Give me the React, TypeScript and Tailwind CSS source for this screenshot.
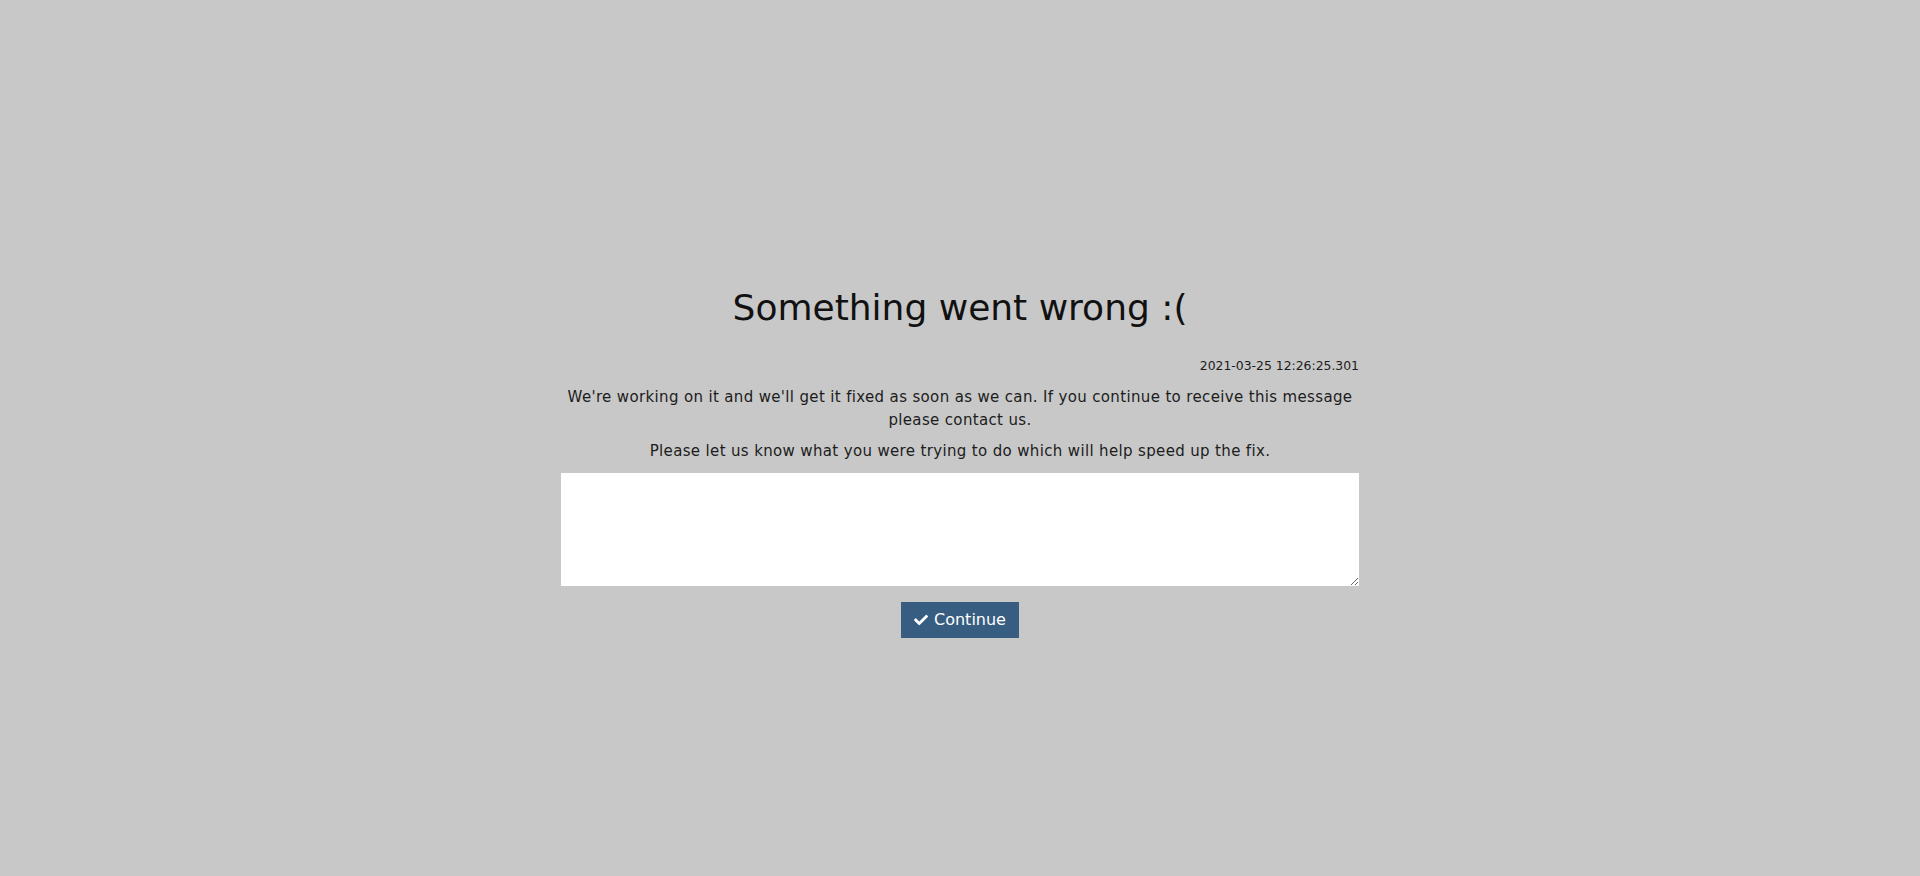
import { FaCheck } from "react-icons/fa";
import { useState } from "react";

const App = () => {
  const [message, setMessage] = useState("");

  return (
    <div className="min-h-[876px] w-full bg-[#c8c8c8] font-['DejaVu_Sans',sans-serif] text-[#1c1c1c]">
      <div className="mx-auto w-[798px] pt-[286px]">
        <h1 className="text-center text-[36px] leading-[44px] font-normal text-[#111]">Something went wrong :(</h1>
        <div className="mt-[27px] text-right text-[12.4px] leading-[18px]">2021-03-25 12:26:25.301</div>
        <p className="mt-[11px] text-center text-[15px] leading-[23px] tracking-[0.35px]">
          We're working on it and we'll get it fixed as soon as we can. If you continue to receive this message please contact us.
        </p>
        <p className="mt-[8px] text-center text-[15px] leading-[23px] tracking-[0.35px]">
          Please let us know what you were trying to do which will help speed up the fix.
        </p>
        <textarea
          value={message}
          onChange={(e) => setMessage(e.target.value)}
          className="mt-[10px] block h-[113px] w-full bg-white p-2 text-[15px] outline-none"
        />
        <div className="mt-[16px] flex justify-center">
          <button className="flex h-[36px] w-[118px] items-center justify-center gap-[6px] bg-[#375d81] text-[16px] text-white">
            <FaCheck className="h-[14px] w-[14px]" />
            Continue
          </button>
        </div>
      </div>
    </div>
  );
};

export default App;
